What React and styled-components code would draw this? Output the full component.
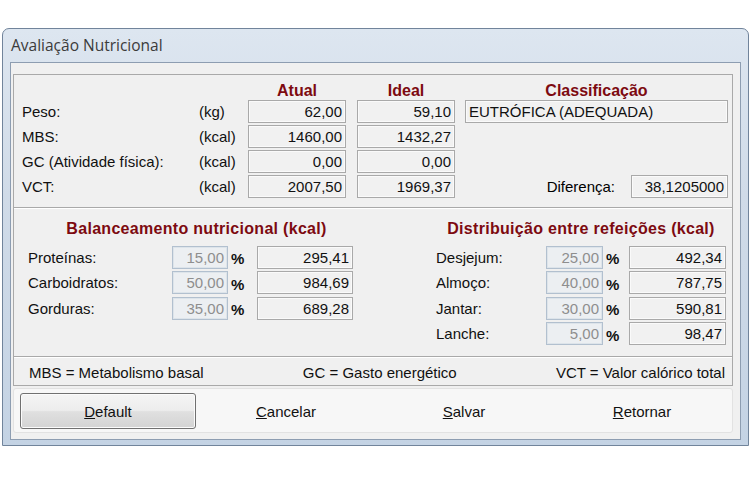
import React from 'react'
import styled, { createGlobalStyle } from 'styled-components'

const Global = createGlobalStyle`
  body {
    margin: 0;
    background: #ffffff;
    font-family: "Liberation Sans", Arial, sans-serif;
  }
`

const Window = styled.div`
  box-sizing: border-box;
  width: 747px;
  height: 418px;
  margin: 28px 0 0 2px;
  border: 1px solid #71849b;
  border-radius: 7px 7px 0 0;
  background: linear-gradient(#dde6f0 0%, #d0dbe8 40%, #c4d3e4 100%);
  padding: 0 7px 5px 7px;
  display: flex;
  flex-direction: column;
`

const TitleBar = styled.div`
  height: 33px;
  display: flex;
  align-items: center;
  padding-left: 1px;
  padding-bottom: 1px;
  box-sizing: border-box;
  font-family: "Open Sans", "Noto Sans", sans-serif;
  font-size: 15.5px;
  color: #3b3b3b;
`

const Client = styled.div`
  flex: 1;
  box-sizing: border-box;
  border: 1px solid #8d9db1;
  background: #f0f0f0;
  padding: 11px 7px 0 2px;
`

const GroupBox = styled.div`
  box-sizing: border-box;
  height: 312px;
  border: 1px solid #a9a9a9;
  display: flex;
  flex-direction: column;
`

const Section = styled.div`
  box-sizing: border-box;
  height: ${p => p.$height}px;
  border-bottom: ${p => (p.$last ? 'none' : '1px solid #a9a9a9')};
  box-shadow: ${p => (p.$last ? 'none' : '0 1px 0 #ffffff')};
`

const TopGrid = styled.div`
  display: grid;
  grid-template-columns: 177px 49px 109px 108px 263px;
  grid-template-rows: 22px repeat(4, 23px);
  row-gap: 2px;
  padding-left: 8px;
  padding-top: 1px;
`

const ColHead = styled.div`
  width: ${p => p.$width}px;
  padding-top: 7px;
  line-height: 16px;
  text-align: center;
  font-weight: bold;
  font-size: 16px;
  color: #7d0a10;
  box-sizing: border-box;
`

const Label = styled.div`
  display: flex;
  align-items: center;
  font-size: 15px;
  color: #111;
`

const Field = styled.div`
  box-sizing: border-box;
  width: ${p => p.$width}px;
  height: 23px;
  line-height: 21px;
  padding: 0 3px;
  font-size: 15px;
  white-space: nowrap;
  text-align: ${p => (p.$left ? 'left' : 'right')};
  color: ${p => (p.$muted ? '#8e8e8e' : '#111')};
  background: ${p => (p.$muted ? '#eceff2' : '#f1f1f1')};
  border: 1px solid ${p => (p.$muted ? '#b2c0cf' : '#a9a9a9')};
  box-shadow: inset 0 0 0 1px ${p => (p.$muted ? '#dde4ea' : '#fafafa')};
`

const DiffCell = styled.div`
  display: flex;
  align-items: center;
  justify-content: flex-end;
  gap: 16px;
  font-size: 15px;
`

const BalanceRow = styled.div`
  display: flex;
  padding: 12px 6px 0 14px;
`

const Block = styled.div`
  display: grid;
  grid-template-columns: ${p => p.$cols};
  grid-auto-rows: 23px;
  row-gap: 2.5px;
  margin-left: ${p => (p.$right ? 'auto' : '0')};
  align-content: start;
`

const BlockHead = styled.div`
  grid-column: 1 / -1;
  height: 18px;
  line-height: 18px;
  margin-bottom: 8.5px;
  text-align: center;
  font-weight: bold;
  font-size: 16px;
  letter-spacing: 0.3px;
  color: #7d0a10;
  padding-left: ${p => p.$shift || 0}px;
`

const Pct = styled.div`
  display: flex;
  align-items: center;
  padding-left: 3px;
  padding-top: 3px;
  font-size: 15px;
  font-weight: bold;
  color: #111;
`

const Legend = styled.div`
  display: flex;
  justify-content: space-between;
  align-items: center;
  height: 100%;
  padding: 3px 7px 0 15px;
  box-sizing: border-box;
  font-size: 15px;
  color: #111;
`

const ButtonBar = styled.div`
  box-sizing: border-box;
  margin-top: 2px;
  height: 45px;
  width: 720px;
  border: 1px solid #e2e2e2;
  border-radius: 3px;
  background: #f7f7f7;
  padding: 4px 1px 3px 6px;
  display: grid;
  grid-template-columns: repeat(4, 176px);
  column-gap: 2px;
`

const Button = styled.div`
  box-sizing: border-box;
  display: flex;
  align-items: center;
  justify-content: center;
  font-size: 15px;
  color: #111;
  border-radius: 3px;
  border: 1px solid ${p => (p.$primary ? '#707070' : 'transparent')};
  background: ${p =>
    p.$primary
      ? 'linear-gradient(#f4f4f4 0%, #ededed 48%, #e0e0e0 52%, #d3d3d3 100%)'
      : 'transparent'};
  box-shadow: ${p => (p.$primary ? 'inset 0 0 0 1px #fbfbfb' : 'none')};
`

const top = [
  { label: 'Peso:', unit: '(kg)', atual: '62,00', ideal: '59,10' },
  { label: 'MBS:', unit: '(kcal)', atual: '1460,00', ideal: '1432,27' },
  { label: 'GC (Atividade física):', unit: '(kcal)', atual: '0,00', ideal: '0,00' },
  { label: 'VCT:', unit: '(kcal)', atual: '2007,50', ideal: '1969,37' },
]

const macros = [
  ['Proteínas:', '15,00', '295,41'],
  ['Carboidratos:', '50,00', '984,69'],
  ['Gorduras:', '35,00', '689,28'],
]

const meals = [
  ['Desjejum:', '25,00', '492,34'],
  ['Almoço:', '40,00', '787,75'],
  ['Jantar:', '30,00', '590,81'],
  ['Lanche:', '5,00', '98,47'],
]

const PctRows = ({ rows, pctW, valW }) =>
  rows.map(([name, pct, val]) => (
    <React.Fragment key={name}>
      <Label>{name}</Label>
      <Field $muted $width={pctW}>{pct}</Field>
      <Pct>%</Pct>
      <Field $width={valW}>{val}</Field>
    </React.Fragment>
  ))

const App = () => {
  return (
    <>
      <Global />
      <Window>
        <TitleBar>Avaliação Nutricional</TitleBar>
        <Client>
          <GroupBox>
            <Section $height={133}>
              <TopGrid>
                <div />
                <div />
                <ColHead $width={98}>Atual</ColHead>
                <ColHead $width={98}>Ideal</ColHead>
                <ColHead $width={263}>Classificação</ColHead>
                {top.map((r, i) => (
                  <React.Fragment key={r.label}>
                    <Label>{r.label}</Label>
                    <Label>{r.unit}</Label>
                    <Field $width={98}>{r.atual}</Field>
                    <Field $width={98}>{r.ideal}</Field>
                    {i === 0 && <Field $width={263} $left>EUTRÓFICA (ADEQUADA)</Field>}
                    {(i === 1 || i === 2) && <div />}
                    {i === 3 && (
                      <DiffCell>
                        Diferença:
                        <Field $width={97}>38,1205000</Field>
                      </DiffCell>
                    )}
                  </React.Fragment>
                ))}
              </TopGrid>
            </Section>

            <Section $height={149}>
              <BalanceRow>
                <Block $cols="144px 56px 29px 96px">
                  <BlockHead $shift={12}>Balanceamento nutricional (kcal)</BlockHead>
                  <PctRows rows={macros} pctW={56} valW={96} />
                </Block>
                <Block $right $cols="110px 57px 26px 97px">
                  <BlockHead>Distribuição entre refeições (kcal)</BlockHead>
                  <PctRows rows={meals} pctW={57} valW={97} />
                </Block>
              </BalanceRow>
            </Section>

            <Section $height={28} $last>
              <Legend>
                <span>MBS = Metabolismo basal</span>
                <span>GC = Gasto energético</span>
                <span>VCT = Valor calórico total</span>
              </Legend>
            </Section>
          </GroupBox>

          <ButtonBar>
            <Button $primary><u>D</u>efault</Button>
            <Button><u>C</u>ancelar</Button>
            <Button><u>S</u>alvar</Button>
            <Button><u>R</u>etornar</Button>
          </ButtonBar>
        </Client>
      </Window>
    </>
  )
}

export default App
